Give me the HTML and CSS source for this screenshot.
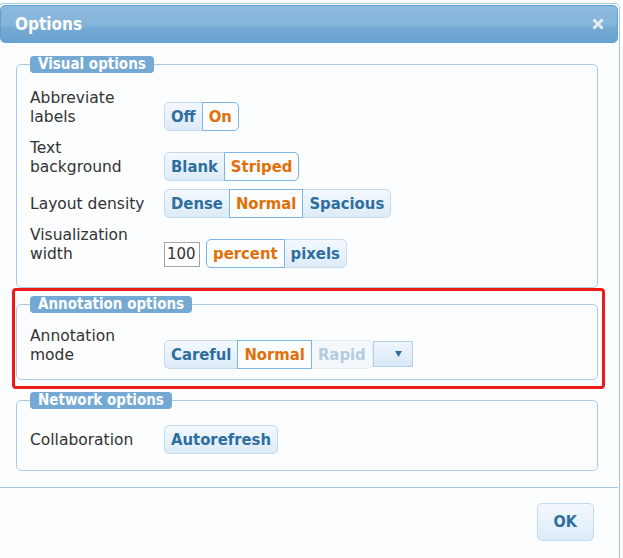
FILE: index.html
```html
<!DOCTYPE html>
<html>
<head>
<meta charset="utf-8">
<title>Options</title>
<link rel="stylesheet" href="styles.css">
</head>
<body>
<div class="dialog">
  <div class="titlebar">
    <span class="title">Options</span>
    <span class="close"><svg width="12" height="12" viewBox="0 0 12 12"><path d="M1.5 1.5L10.5 10.5M10.5 1.5L1.5 10.5" stroke="#e3edf7" stroke-width="3"/></svg></span>
  </div>
  <div class="content">
    <fieldset class="group visual">
      <legend>Visual options</legend>
      <div class="row"><span class="label">Abbreviate labels</span><span class="buttonset"><span class="btn first">Off</span><span class="btn last active">On</span></span></div>
      <div class="row"><span class="label">Text background</span><span class="buttonset"><span class="btn first">Blank</span><span class="btn last active">Striped</span></span></div>
      <div class="row"><span class="label">Layout density</span><span class="buttonset"><span class="btn first">Dense</span><span class="btn active">Normal</span><span class="btn last">Spacious</span></span></div>
      <div class="row"><span class="label">Visualization width</span><span class="num">100</span><span class="buttonset"><span class="btn first active">percent</span><span class="btn last">pixels</span></span></div>
    </fieldset>
    <div class="annot-wrap">
      <fieldset class="group tight">
        <legend>Annotation options</legend>
        <div class="row"><span class="label">Annotation mode</span><span class="buttonset"><span class="btn first">Careful</span><span class="btn active">Normal</span><span class="btn last disabled">Rapid</span><span class="dropdown"><svg width="7" height="6" viewBox="0 0 7 6"><path d="M0 0H7L3.5 6Z" fill="#2e6e9e"/></svg></span></span></div>
      </fieldset>
      <div class="highlight"></div>
    </div>
    <fieldset class="group network">
      <legend>Network options</legend>
      <div class="row"><span class="label">Collaboration</span><span class="buttonset"><span class="btn only">Autorefresh</span></span></div>
    </fieldset>
  </div>
  <div class="buttonpane"><span class="ok">OK</span></div>
</div>
</body>
</html>
```
FILE: styles.css
```css
* { box-sizing: border-box; }
html, body { margin: 0; padding: 0; background: #ffffff; overflow: hidden; }
body { font-family: "DejaVu Sans", Verdana, sans-serif; color: #333333; }

.dialog {
  margin: 3px 0 0 -2px;
  width: 622px;
  height: 580px;
  border: 1px solid #a6c9e2;
  border-radius: 5px;
  padding: 1px;
  background: #fcfdfe;
}

.titlebar {
  height: 38px;
  border: 1px solid #5da0d6;
  border-radius: 5px;
  background: linear-gradient(180deg, #8dbade 0%, #86b5da 52%, #74aad3 62%, #6aa3d0 100%);
  display: flex;
  align-items: center;
  justify-content: space-between;
  padding: 0 13px 0 14px;
}
.title {
  font-family: "DejaVu Sans Condensed", "DejaVu Sans", sans-serif;
  font-weight: bold;
  font-size: 17px;
  color: #ffffff;
}
.close { display: flex; width: 12px; height: 12px; }

.content { padding: 13px 20px 16px 16px; }

fieldset.group {
  margin: 0;
  min-width: 0;
  border: 1px solid #a9cbe6;
  border-radius: 5px;
  padding: 16px 13px 17px 13px;
}
fieldset.visual { padding-bottom: 19px; }
fieldset.group.tight { padding-top: 14px; padding-bottom: 10px; }
fieldset.network { margin-top: 12px; padding-bottom: 16px; }

legend {
  padding: 0 8px;
  background: #74a9d3;
  color: #ffffff;
  border-radius: 4px;
  font-family: "DejaVu Sans Condensed", "DejaVu Sans", sans-serif;
  font-weight: bold;
  font-size: 15px;
  line-height: 17px;
}

.row { font-size: 15.5px; line-height: 19px; }
.row + .row { margin-top: 8px; }

.label {
  display: inline-block;
  width: 120px;
  margin-right: 14px;
  vertical-align: baseline;
  color: #333333;
}

.buttonset { display: inline-block; vertical-align: baseline; }

.btn {
  display: inline-block;
  font-family: "DejaVu Sans Condensed", "DejaVu Sans", sans-serif;
  font-weight: bold;
  font-size: 16.5px;
  line-height: 19px;
  padding: 4px 6px;
  border: 1px solid #c5dbec;
  color: #2e6e9e;
  background: linear-gradient(180deg, #f3f8fd 0%, #e8f2fb 50%, #dcebf8 100%);
}
.btn + .btn { margin-left: -1px; }
.btn.first { border-radius: 5px 0 0 5px; }
.btn.last { border-radius: 0 5px 5px 0; }
.btn.only { border-radius: 5px; }
.btn.active {
  position: relative;
  background: #fbfdfe;
  border-color: #7cb5e3;
  color: #e17009;
}
.btn.disabled {
  color: #b4cce0;
  background: #f4f8fc;
  border-color: #e3edf6;
}

.dropdown {
  display: inline-flex;
  align-items: center;
  justify-content: flex-end;
  vertical-align: top;
  width: 40px;
  height: 26px;
  margin-top: 1px;
  padding-right: 10px;
  border: 1px solid #b4d1ea;
  background: linear-gradient(180deg, #eef5fc 0%, #e4eff9 50%, #d8e8f6 100%);
}

.num {
  display: inline-block;
  width: 36px;
  height: 25px;
  padding: 0 2px;
  margin-right: 6px;
  border: 1px solid #a5a5a5;
  background: #ffffff;
  font-family: "DejaVu Sans", sans-serif;
  font-size: 15px;
  line-height: 23px;
  color: #333333;
  vertical-align: baseline;
}

.annot-wrap { position: relative; margin-top: 8px; }
.highlight {
  position: absolute;
  left: -4px;
  top: -8px;
  width: 593px;
  height: 101px;
  border: 3px solid #ee1b1b;
  border-radius: 4px;
  pointer-events: none;
}

.buttonpane {
  border-top: 1px solid #a6c9e2;
  padding: 15px 24px 0 0;
  display: flex;
  justify-content: flex-end;
}
.ok {
  font-family: "DejaVu Sans Condensed", "DejaVu Sans", sans-serif;
  font-weight: bold;
  font-size: 16px;
  line-height: 18px;
  padding: 9px 16px;
  border: 1px solid #c5dbec;
  border-radius: 5px;
  color: #2e6e9e;
  background: linear-gradient(180deg, #f3f8fd 0%, #e8f2fb 50%, #dcebf8 100%);
}
```
